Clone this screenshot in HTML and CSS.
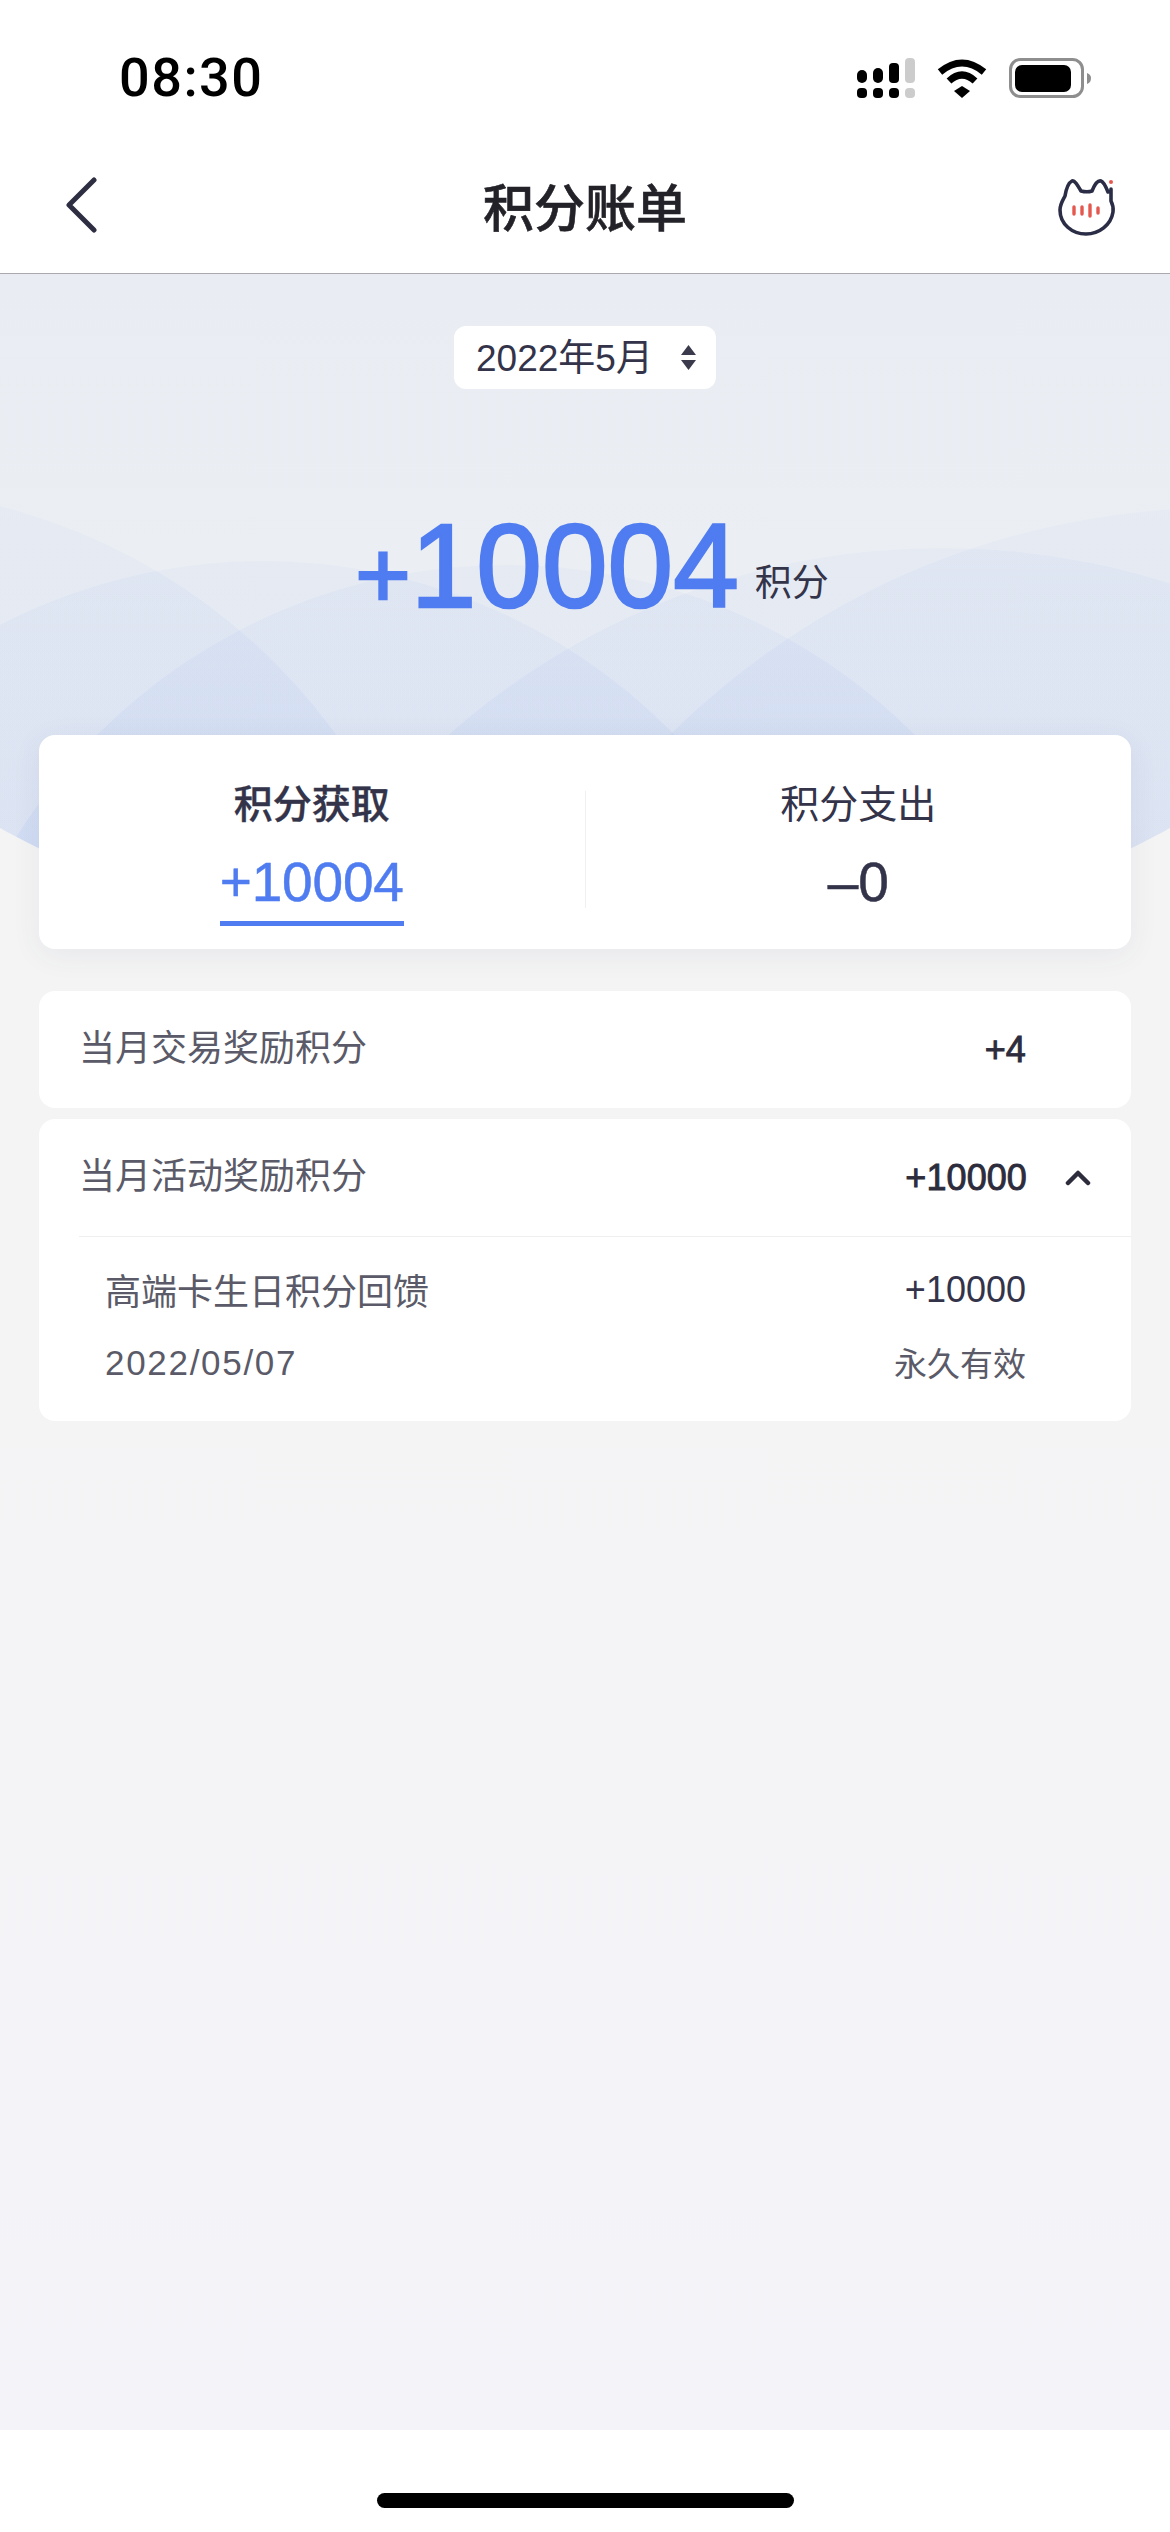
FILE: index.html
```html
<!DOCTYPE html>
<html lang="zh-CN">
<head>
    <meta charset="UTF-8">
    <meta name="viewport" content="width=device-width, initial-scale=1.0">
    <title>积分账单</title>
    <link rel="stylesheet" href="styles.css">
</head>
<body>
    <div class="page">
        <!-- Status bar and title -->
        <header class="top">
            <div class="status">
                <span class="time">08:30</span>
                <div class="status-icons">
                    <svg class="signal" width="58" height="40" viewBox="0 0 58 40">
                        <rect x="0" y="12" width="10" height="13" rx="5" fill="#000"/>
                        <rect x="16" y="10" width="10" height="15" rx="5" fill="#000"/>
                        <rect x="32" y="5" width="10" height="20" rx="4" fill="#000"/>
                        <rect x="48" y="0" width="10" height="25" rx="4" fill="#ccc"/>
                        <rect x="0" y="30" width="10" height="10" rx="4" fill="#000"/>
                        <rect x="16" y="30" width="10" height="10" rx="4" fill="#000"/>
                        <rect x="32" y="30" width="10" height="10" rx="4" fill="#000"/>
                        <rect x="48" y="30" width="10" height="10" rx="4" fill="#ccc"/>
                    </svg>
                    <svg class="wifi" width="50" height="40" viewBox="0 0 50 40">
                        <path d="M3 14 Q25 -4 47 14" fill="none" stroke="#000" stroke-width="7"/>
                        <path d="M12 23 Q25 11 38 23" fill="none" stroke="#000" stroke-width="7"/>
                        <polygon points="17,33 25,28 33,33 25,40" fill="#000"/>
                    </svg>
                    <svg class="battery" width="82" height="40" viewBox="0 0 82 40">
                        <rect x="1.5" y="1.5" width="72" height="37" rx="10" fill="none" stroke="#8e8e8e" stroke-width="3"/>
                        <rect x="6" y="7" width="56" height="27" rx="7" fill="#000"/>
                        <path d="M78 15 C81 16 82 18 82 20 C82 23 81 25 78 26 Z" fill="#8e8e8e"/>
                    </svg>
                </div>
            </div>
            <nav class="nav">
                <svg class="back" width="34" height="56" viewBox="0 0 34 56">
                    <path d="M29 3 L4 28 L29 53" fill="none" stroke="#2e2e42" stroke-width="5" stroke-linecap="round" stroke-linejoin="round"/>
                </svg>
                <h1>积分账单</h1>
                <svg class="cat" width="60" height="62" viewBox="34 15 60 62">
                    <path d="M88 30 V42 C90 46 90.5 50 90 53 C88 66 76 75 63 75 C49 75 37 65 37 51 C37 45 40 41 42 37 C43 31 45 24 49 22 C52 21 55 27 58 32 C62 33 66 33 69 32 C71 27 74 21 78 22 C81 23 83 28 85 33" fill="none" stroke="#2a2d45" stroke-width="3.6" stroke-linecap="round" stroke-linejoin="round"/>
                    <circle cx="88" cy="23" r="2" fill="#e4584f"/>
                    <path d="M51 48 V55 M59 48 V55 M67 46 V57 M75 49 V54" fill="none" stroke="#e4584f" stroke-width="3.4" stroke-linecap="round"/>
                </svg>
            </nav>
        </header>

        <main class="main">
            <!-- Background waves -->
            <svg class="waves" width="1170" height="650" viewBox="0 274 1170 650">
                <defs>
                    <linearGradient id="waveFill" gradientUnits="userSpaceOnUse" x1="0" y1="500" x2="0" y2="850">
                        <stop offset="0" stop-color="#5a8cec" stop-opacity="0.03"/>
                        <stop offset="1" stop-color="#5a8cec" stop-opacity="0.085"/>
                    </linearGradient>
                    <clipPath id="waveClip">
                        <circle cx="585" cy="-255" r="1231"/>
                    </clipPath>
                </defs>
                <g clip-path="url(#waveClip)" fill="url(#waveFill)">
                    <circle cx="-150" cy="1088" r="601"/>
                    <circle cx="263" cy="1135" r="574"/>
                    <circle cx="506" cy="1142" r="577"/>
                    <circle cx="942" cy="1293" r="745"/>
                    <circle cx="1220" cy="1288" r="780"/>
                </g>
            </svg>

            <div class="content">
                <div class="month">
                    <span>2022年5月</span>
                    <svg width="17" height="26" viewBox="0 0 17 26">
                        <polygon points="8.5,0 16,10 1,10" fill="#3a3a4c"/>
                        <polygon points="1,15 16,15 8.5,25" fill="#3a3a4c"/>
                    </svg>
                </div>

                <div class="total">
                    <span class="total-num"><span class="total-plus">+</span>10004</span>
                    <span class="total-unit">积分</span>
                </div>

                <div class="tabs">
                    <div class="tab active">
                        <div class="tab-title">积分获取</div>
                        <div class="tab-num">+10004</div>
                    </div>
                    <div class="tab-line"></div>
                    <div class="tab">
                        <div class="tab-title">积分支出</div>
                        <div class="tab-num">–0</div>
                    </div>
                </div>

                <section class="card">
                    <div class="row">
                        <span class="row-label">当月交易奖励积分</span>
                        <span class="row-value">+4</span>
                    </div>
                </section>

                <section class="card">
                    <div class="row open">
                        <span class="row-label">当月活动奖励积分</span>
                        <span class="row-value">+10000</span>
                        <svg class="chevron" width="26" height="16" viewBox="0 0 26 16">
                            <path d="M3 13 L13 3 L23 13" fill="none" stroke="#2c2c3c" stroke-width="4.5" stroke-linecap="round" stroke-linejoin="round"/>
                        </svg>
                    </div>
                    <div class="detail">
                        <div class="detail-line">
                            <span class="detail-name">高端卡生日积分回馈</span>
                            <span class="detail-amount">+10000</span>
                        </div>
                        <div class="detail-line">
                            <span class="detail-date">2022/05/07</span>
                            <span class="detail-valid">永久有效</span>
                        </div>
                    </div>
                </section>
            </div>
        </main>

        <footer class="bottom">
            <div class="home-bar"></div>
        </footer>
    </div>
</body>
</html>
```

FILE: styles.css
```css
* {
    box-sizing: border-box;
}

body {
    margin: 0;
    font-family: "Liberation Sans", "Noto Sans CJK SC", sans-serif;
    color: #2c2c3c;
}

.page {
    width: 1170px;
    height: 2532px;
    display: flex;
    flex-direction: column;
    background-color: #fff;
}

/* Top */
.top {
    height: 274px;
    background-color: #fff;
    border-bottom: 1px solid #a9a9ae;
}

.status {
    height: 155px;
    display: flex;
    align-items: center;
    justify-content: space-between;
    padding: 0 79px 0 119px;
}

.time {
    font-family: Roboto, sans-serif;
    font-size: 54px;
    font-weight: 500;
    letter-spacing: 1.5px;
    color: #000;
}

.status-icons {
    display: flex;
    align-items: center;
    gap: 22px;
}

.nav {
    height: 106px;
    display: grid;
    grid-template-columns: 1fr auto 1fr;
    align-items: center;
    padding: 0 56px 6px;
}

.nav h1 {
    margin: 0;
    font-size: 51px;
    font-weight: 500;
    -webkit-text-stroke: 0.6px #222228;
    color: #222228;
}

.back {
    display: block;
    margin-left: 9px;
}

.cat {
    display: block;
    justify-self: end;
    margin-right: -3px;
}

/* Main */
.main {
    position: relative;
    flex: 1;
    overflow: hidden;
    background: linear-gradient(#e9edf3 0, #ebeef3 300px, #f4f4f4 556px, #f4f4f5 1100px, #f4f3f9 100%);
}

.waves {
    position: absolute;
    top: 0;
    left: 0;
}

.content {
    position: relative;
    padding: 52px 39px 0;
}

.month {
    width: 262px;
    height: 63px;
    margin: 0 auto;
    display: flex;
    align-items: center;
    justify-content: space-between;
    padding: 0 19px 0 22px;
    background-color: #fff;
    border-radius: 12px;
    font-size: 37px;
    color: #33334a;
}

.month span {
    padding-bottom: 6px;
}

.total {
    height: 130px;
    margin: 116px 0 100px;
    padding-left: 14px;
    display: flex;
    align-items: center;
    justify-content: center;
    line-height: 130px;
}

.total-num {
    font-size: 118px;
    -webkit-text-stroke: 2.5px #4f7cf0;
    color: #4f7cf0;
}

.total-plus {
    font-size: 95px;
}

.total-unit {
    margin: 28px 0 0 16px;
    font-size: 37px;
    line-height: 50px;
    color: #33334a;
}

.tabs {
    display: grid;
    grid-template-columns: 1fr 1px 1fr;
    height: 214px;
    padding-top: 46px;
    background-color: #fff;
    border-radius: 16px;
    box-shadow: 0 6px 30px rgba(60, 70, 110, 0.07);
}

.tab {
    text-align: center;
}

.tab-line {
    height: 117px;
    margin-top: 10px;
    background-color: #f0f0f2;
}

.tab-title {
    font-size: 39px;
    line-height: 48px;
    color: #33334a;
}

.tab-num {
    display: inline-block;
    margin-top: 23px;
    padding-bottom: 9px;
    font-size: 55px;
    line-height: 60px;
    letter-spacing: -0.2px;
    -webkit-text-stroke: 0.5px currentColor;
    color: #33334a;
    border-bottom: 5px solid transparent;
}

.tab.active .tab-title {
    font-weight: 500;
    -webkit-text-stroke: 0.4px #33334a;
}

.tab.active .tab-num {
    color: #4f7cf0;
    border-bottom-color: #4f7cf0;
}

/* Lists */
.card {
    margin-top: 11px;
    background-color: #fff;
    border-radius: 16px;
}

.tabs + .card {
    margin-top: 42px;
}

.row {
    height: 117px;
    margin-left: 40px;
    padding-right: 105px;
    display: flex;
    align-items: center;
}

.row.open {
    height: 118px;
    padding-right: 40px;
    border-bottom: 1px solid #efeff1;
}

.row-label {
    flex: 1;
    padding-bottom: 9px;
    font-size: 36px;
    color: #5a5a68;
}

.row-value {
    font-size: 36px;
    letter-spacing: 0.1px;
    -webkit-text-stroke: 0.9px currentColor;
    color: #2c2c3c;
}

.chevron {
    margin-left: 38px;
}

.detail {
    padding: 27px 105px 34px 66px;
}

.detail-line {
    height: 50px;
    display: flex;
    align-items: center;
    justify-content: space-between;
    color: #5a5a68;
}

.detail-line + .detail-line {
    margin-top: 23px;
}

.detail-name,
.detail-amount {
    font-size: 36px;
}

.detail-amount {
    padding-top: 2px;
    color: #33334a;
}

.detail-date {
    padding-top: 2px;
    font-size: 35px;
    letter-spacing: 1.7px;
}

.detail-valid {
    font-size: 33px;
}

/* Bottom */
.bottom {
    height: 102px;
    padding-top: 63px;
    background-color: #fff;
}

.home-bar {
    width: 417px;
    height: 15px;
    margin: 0 auto;
    background-color: #000;
    border-radius: 8px;
}
```
